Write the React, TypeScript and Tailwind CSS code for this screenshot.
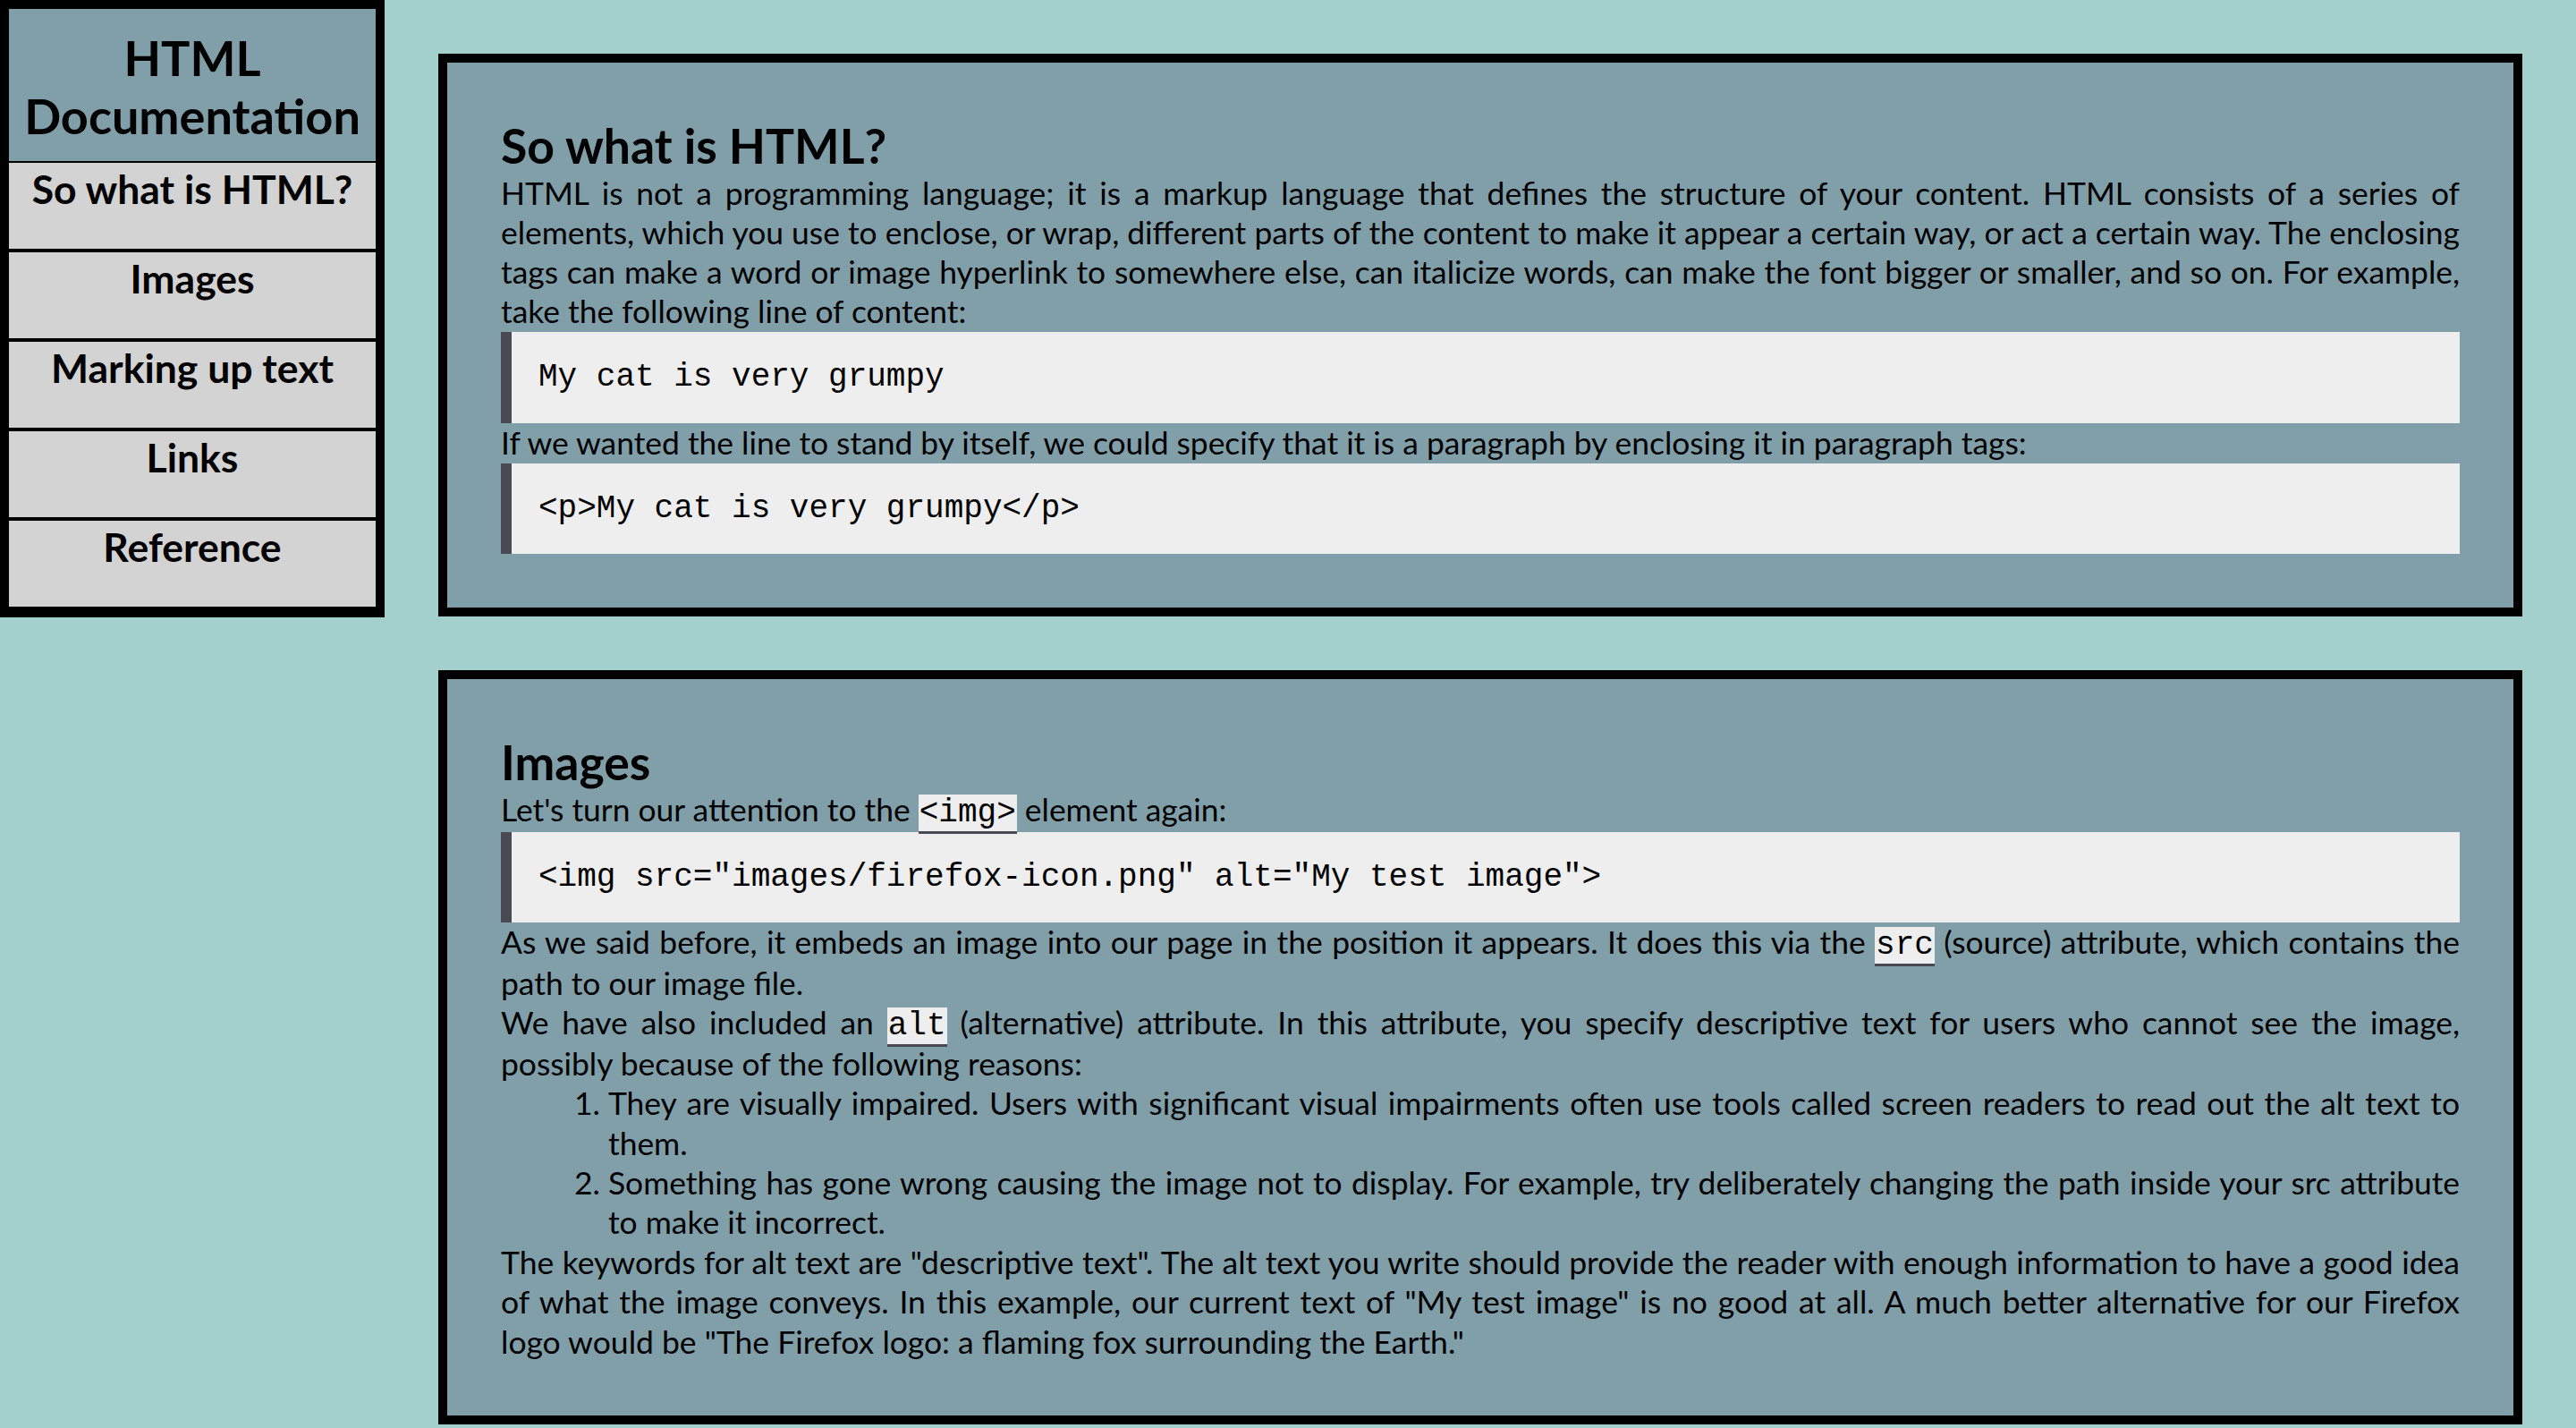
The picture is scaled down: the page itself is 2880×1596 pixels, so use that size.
const navItems = ["So what is HTML?", "Images", "Marking up text", "Links", "Reference"];

const Code = ({ children }: { children: React.ReactNode }) => (
  <code className="bg-[#eeeeee] border-b-[3px] border-[#4a4a55] px-[1px] font-['Liberation_Mono',monospace] text-[36px] leading-[1.1]">
    {children}
  </code>
);

const Pre = ({ children }: { children: React.ReactNode }) => (
  <pre className="mt-[1px] bg-[#eeeeee] border-l-[12px] border-[#4a4a55] p-[30px] font-['Liberation_Mono',monospace] text-[36px] leading-[1.15]">
    {children}
  </pre>
);

const App = () => {
  return (
    <div className="min-h-screen bg-[#a3cfcd] font-['Lato',sans-serif] text-black flex items-start">
      <nav className="w-[430px] shrink-0 border-[10px] border-black bg-[#d3d3d3]">
        <header className="bg-[#809fa8] pt-[23px] pb-[17px] text-center text-[54px] font-bold leading-[1.2]">
          HTML Documentation
        </header>
        <ul>
          {navItems.map((item) => (
            <li
              key={item}
              className="h-[100px] border-y-2 border-black pt-[2px] text-center text-[44.5px] font-bold leading-[1.2]"
            >
              {item}
            </li>
          ))}
        </ul>
      </nav>

      <main className="flex-1 mx-[60px] pt-[60px] pb-[60px] flex flex-col gap-[60px]">
        <section className="border-[10px] border-black bg-[#809fa8] p-[60px] text-[35.4px] leading-[44px]">
          <h2 className="text-[53.5px] font-bold leading-[1.2]">So what is HTML?</h2>
          <p className="text-justify">
            HTML is not a programming language; it is a markup language that defines the structure of your
            content. HTML consists of a series of elements, which you use to enclose, or wrap, different parts of
            the content to make it appear a certain way, or act a certain way. The enclosing tags can make a word
            or image hyperlink to somewhere else, can italicize words, can make the font bigger or smaller, and so
            on. For example, take the following line of content:
          </p>
          <Pre>My cat is very grumpy</Pre>
          <p className="text-justify">
            If we wanted the line to stand by itself, we could specify that it is a paragraph by enclosing it in
            paragraph tags:
          </p>
          <Pre>{"<p>My cat is very grumpy</p>"}</Pre>
        </section>

        <section className="border-[10px] border-black bg-[#809fa8] p-[60px] text-[35.4px] leading-[44.4px]">
          <h2 className="text-[53.5px] font-bold leading-[1.2]">Images</h2>
          <p className="text-justify">
            Let's turn our attention to the <Code>{"<img>"}</Code> element again:
          </p>
          <Pre>{'<img src="images/firefox-icon.png" alt="My test image">'}</Pre>
          <p className="text-justify">
            As we said before, it embeds an image into our page in the position it appears. It does this via the{" "}
            <Code>src</Code> (source) attribute, which contains the path to our image file.
          </p>
          <p className="text-justify">
            We have also included an <Code>alt</Code> (alternative) attribute. In this attribute, you specify
            descriptive text for users who cannot see the image, possibly because of the following reasons:
          </p>
          <ol className="list-decimal pl-[120px] text-justify">
            <li>
              They are visually impaired. Users with significant visual impairments often use tools called screen
              readers to read out the alt text to them.
            </li>
            <li>
              Something has gone wrong causing the image not to display. For example, try deliberately changing
              the path inside your src attribute to make it incorrect.
            </li>
          </ol>
          <p className="text-justify text-[35.5px]">
            The keywords for alt text are "descriptive text". The alt text you write should provide the reader
            with enough information to have a good idea of what the image conveys. In this example, our current
            text of "My test image" is no good at all. A much better alternative for our Firefox logo would be
            "The Firefox logo: a flaming fox surrounding the Earth."
          </p>
        </section>
      </main>
    </div>
  );
};

export default App;
